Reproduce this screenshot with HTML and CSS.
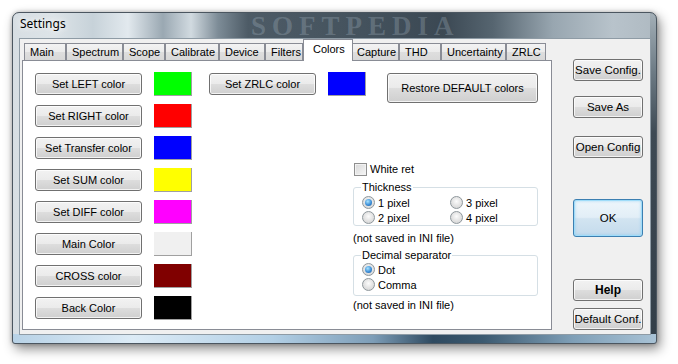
FILE: index.html
```html
<!DOCTYPE html>
<html>
<head>
<meta charset="utf-8">
<title>Settings</title>
<link rel="stylesheet" href="styles.css">
</head>
<body>
<div class="page">
  <div class="window">
    <div class="titlebar"><span class="title">Settings</span><span class="watermark">SOFTPEDIA</span></div>
    <div class="client">
      <div class="tabctl">
        <div class="tabs">
          <div class="tab">Main</div>
          <div class="tab">Spectrum</div>
          <div class="tab">Scope</div>
          <div class="tab">Calibrate</div>
          <div class="tab">Device</div>
          <div class="tab">Filters</div>
          <div class="tab selected">Colors</div>
          <div class="tab">Capture</div>
          <div class="tab">THD</div>
          <div class="tab">Uncertainty</div>
          <div class="tab">ZRLC</div>
        </div>
        <div class="panel">
          <div class="col-colors">
            <div class="crow"><button class="btn cbtn">Set LEFT color</button><span class="swatch sw-green"></span></div>
            <div class="crow"><button class="btn cbtn">Set RIGHT color</button><span class="swatch sw-red"></span></div>
            <div class="crow"><button class="btn cbtn">Set Transfer color</button><span class="swatch sw-blue"></span></div>
            <div class="crow"><button class="btn cbtn">Set SUM color</button><span class="swatch sw-yellow"></span></div>
            <div class="crow"><button class="btn cbtn">Set DIFF color</button><span class="swatch sw-magenta"></span></div>
            <div class="crow"><button class="btn cbtn">Main Color</button><span class="swatch sw-main"></span></div>
            <div class="crow"><button class="btn cbtn">CROSS color</button><span class="swatch sw-cross"></span></div>
            <div class="crow"><button class="btn cbtn">Back Color</button><span class="swatch sw-black"></span></div>
          </div>
          <div class="col-right">
            <div class="toprow">
              <button class="btn cbtn">Set ZRLC color</button><span class="swatch sw-blue"></span>
              <button class="btn restore">Restore DEFAULT colors</button>
            </div>
            <div class="options">
              <div class="checkrow"><span class="check"></span><span class="lbl">White ret</span></div>
              <fieldset class="group g-thick">
                <legend>Thickness</legend>
                <div class="radios two">
                  <div class="ropt"><span class="radio on"></span><span>1 pixel</span></div>
                  <div class="ropt"><span class="radio"></span><span>3 pixel</span></div>
                  <div class="ropt"><span class="radio"></span><span>2 pixel</span></div>
                  <div class="ropt"><span class="radio"></span><span>4 pixel</span></div>
                </div>
              </fieldset>
              <div class="note n1">(not saved in INI file)</div>
              <fieldset class="group g-dec">
                <legend>Decimal separator</legend>
                <div class="radios">
                  <div class="ropt"><span class="radio on"></span><span>Dot</span></div>
                  <div class="ropt"><span class="radio"></span><span>Comma</span></div>
                </div>
              </fieldset>
              <div class="note n2">(not saved in INI file)</div>
            </div>
          </div>
        </div>
      </div>
      <div class="side">
        <button class="btn sbtn m-save">Save Config.</button>
        <button class="btn sbtn m-saveas">Save As</button>
        <button class="btn sbtn m-open">Open Config</button>
        <button class="btn sbtn ok m-ok">OK</button>
        <button class="btn sbtn help m-help">Help</button>
        <button class="btn sbtn m-def">Default Conf.</button>
      </div>
    </div>
  </div>
</div>
</body>
</html>
```

FILE: styles.css
```css
* { box-sizing: border-box; }
html, body { margin: 0; padding: 0; background: #ffffff; }
body {
  font-family: "Liberation Sans", Arial, sans-serif;
  font-size: 11px;
  color: #000;
  width: 678px;
  height: 364px;
  overflow: hidden;
}
.page { padding: 12px 0 0 12px; }

.window {
  position: relative;
  width: 645px;
  height: 332px;
  border: 1px solid #4b5660;
  border-radius: 7px 7px 3px 3px;
  display: flex;
  flex-direction: column;
  box-shadow: 3px 5px 12px rgba(0,0,0,0.45), 0 0 4px rgba(0,0,0,0.25);
  background-color: #9aa8b2;
  background-image:
    linear-gradient(90deg, #b8d2e6 0px, #dcebf6 120px, #b2cfe5 260px, #7d9db7 360px, #2f4a60 420px, #3c5a70 470px, #7f9fb7 560px, #a9c3d6 645px),
    linear-gradient(180deg, #a3afb7 0px, #6c7a84 60px, #3e4a54 120px, #323e48 330px),
    linear-gradient(90deg, #d7dee3 0px, #dde4e8 40px, #c7d2d9 80px, #e2e9ee 115px, #9aa8b2 150px, #d1dae0 178px, #7d8c97 205px, #4d5b66 235px, #44525d 350px, #3b4853 430px, #566570 480px, #98a6b0 540px, #b8c3cb 600px, #aeb9c1 645px);
  background-size: 100% 9px, 6px 100%, 100% 100%;
  background-position: left bottom, right top, left top;
  background-repeat: no-repeat;
}
.titlebar {
  position: relative;
  height: 25px;
  padding: 3px 0 0 7px;
  font-family: "Noto Sans", "Open Sans", sans-serif;
  font-size: 12px;
  line-height: 16px;
  color: #000;
}
.title {
  position: relative;
  z-index: 1;
  text-shadow: 0 0 6px #fff, 0 0 10px rgba(255,255,255,0.8);
}
.watermark {
  position: absolute;
  left: 238px;
  top: 1px;
  font-family: "Liberation Serif", serif;
  font-weight: bold;
  font-size: 27px;
  line-height: 24px;
  letter-spacing: 6px;
  color: rgba(170,186,198,0.3);
}
.client {
  flex: 1;
  margin: 0 5px 8px 6px;
  background: #f0f0f0;
  border: 1px solid #8e9ba5;
  display: flex;
}

/* Tab control */
.tabctl {
  margin-left: 2px;
  width: 530px;
  display: flex;
  flex-direction: column;
}
.tabs {
  height: 21px;
  padding-left: 2px;
  display: flex;
  align-items: flex-end;
  position: relative;
  z-index: 2;
}
.tab {
  height: 17px;
  border: 1px solid #898c95;
  border-bottom: none;
  padding: 1px 0 0 5px;
  line-height: 15px;
  white-space: nowrap;
  background: linear-gradient(#f3f3f3, #ebebeb 50%, #dedede 51%, #d8d8d8);
}
.tab:nth-child(1) { width: 42px; }
.tab:nth-child(2) { width: 57px; }
.tab:nth-child(3) { width: 42px; }
.tab:nth-child(4) { width: 54px; }
.tab:nth-child(5) { width: 46px; }
.tab:nth-child(6) { width: 38px; }
.tab:nth-child(7) { width: 50px; }
.tab:nth-child(8) { width: 46px; border-left: none; padding-left: 4px; }
.tab:nth-child(9) { width: 42px; }
.tab:nth-child(10) { width: 65px; }
.tab:nth-child(11) { width: 40px; }
.tab.selected {
  height: 22px;
  margin-bottom: -1px;
  padding: 2px 0 0 9px;
  background: #fff;
}
.panel {
  position: relative;
  height: 270px;
  border: 1px solid #898c95;
  background: #fff;
  padding: 11px 0 0 12px;
  display: flex;
  align-items: flex-start;
}

/* Buttons */
.btn {
  font-family: "Liberation Sans", Arial, sans-serif;
  font-size: 11px;
  color: #000;
  padding: 0;
  margin: 0;
  border: 1px solid #707070;
  border-radius: 3px;
  background: linear-gradient(#f2f2f2 0%, #ebebeb 48%, #dddddd 52%, #cfcfcf 100%);
  box-shadow: inset 0 0 0 1px rgba(255,255,255,0.75);
  text-align: center;
  white-space: nowrap;
}
.cbtn { width: 107px; height: 22px; margin-top: 1px; }
.restore { width: 151px; height: 30px; margin-top: 1px; margin-left: 9px; }

.col-colors { display: flex; flex-direction: column; gap: 8px; }
.crow { display: flex; align-items: flex-start; gap: 12px; height: 24px; }
.swatch {
  display: block;
  width: 38px;
  height: 24px;
  border-right: 1px solid #a0a0a0;
  border-bottom: 1px solid #a0a0a0;
}
.sw-green { background: #00ff00; }
.sw-red { background: #ff0000; }
.sw-blue { background: #0000ff; }
.sw-yellow { background: #ffff00; }
.sw-magenta { background: #ff00ff; }
.sw-main { background: #f0f0f0; }
.sw-cross { background: #800000; }
.sw-black { background: #000000; }

.col-right { margin-left: 17px; display: flex; flex-direction: column; }
.toprow { display: flex; align-items: flex-start; gap: 12px; }

.options { margin-left: 144px; margin-top: 60px; width: 185px; }
.checkrow { display: flex; align-items: center; height: 13px; line-height: 13px; }
.check {
  display: block;
  width: 13px;
  height: 13px;
  margin-left: 1px;
  border: 1px solid #8f8f8f;
  background: linear-gradient(135deg, #d8d8d8, #f6f6f6);
  box-shadow: inset 0 0 0 1px #f2f2f2;
}
.lbl { margin-left: 3px; }

.group {
  margin: 0;
  min-width: 0;
  border: 1px solid #d5dfe5;
  border-radius: 3px;
  padding: 2px 0 0 8px;
}
.group legend {
  padding: 0 1px;
  margin-left: -1px;
  line-height: 12px;
  font-size: 11px;
}
.g-thick { margin-top: 5px; padding-bottom: 0; }
.g-dec { margin-top: 4px; padding-top: 1px; padding-bottom: 3px; }
.radios { display: grid; grid-template-columns: 88px; }
.radios.two { grid-template-columns: 88px 88px; }
.ropt { display: flex; align-items: center; height: 15px; gap: 3px; }
.radio {
  position: relative;
  display: block;
  width: 13px;
  height: 13px;
  border-radius: 50%;
  border: 1px solid #8e979c;
  background: radial-gradient(circle at 50% 40%, #fcfcfc 0%, #e6e6e6 45%, #cfcfcf 100%);
}
.radio.on::after {
  content: "";
  position: absolute;
  left: 2px;
  top: 2px;
  width: 7px;
  height: 7px;
  border-radius: 50%;
  background: radial-gradient(circle at 40% 35%, #a9e4ff 0%, #3d8fd8 55%, #1a5597 100%);
}
.note { line-height: 13px; }
.n1 { margin-top: 6px; }
.n2 { margin-top: 3px; }

/* Side buttons */
.side { margin-left: 21px; display: flex; flex-direction: column; }
.sbtn {
  width: 70px;
  height: 22px;
  font-size: 11.5px;
  color: #000;
}
.m-save { margin-top: 20px; }
.m-saveas { margin-top: 15px; }
.m-open { margin-top: 18px; }
.m-ok { margin-top: 41px; height: 38px; }
.m-help { margin-top: 42px; }
.m-def { margin-top: 7px; }
.ok {
  border-color: #3c7fb1;
  background: linear-gradient(#eef6fb 0%, #e2eef7 48%, #d2e4f1 52%, #c4dbec 100%);
  box-shadow: inset 0 0 0 1px #9fdcf9, inset 0 0 3px 1px rgba(120,200,240,0.6);
}
.help { font-weight: bold; font-size: 12px; }
```
